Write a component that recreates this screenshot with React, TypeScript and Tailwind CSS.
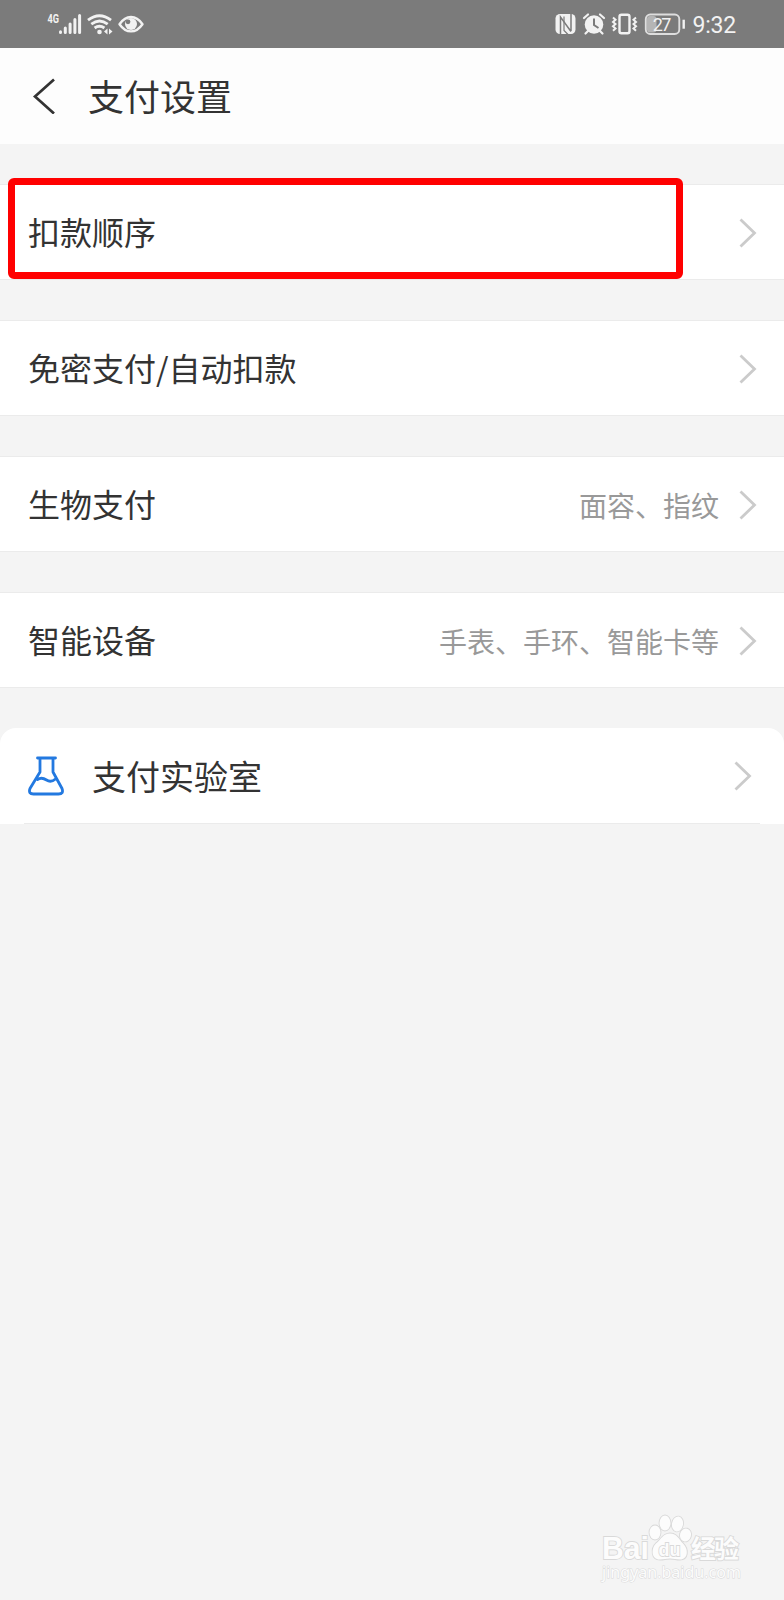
import React from "react";

interface SettingItem {
  label: string;
  value?: string;
}

const settings: SettingItem[] = [
  { label: "扣款顺序" },
  { label: "免密支付/自动扣款" },
  { label: "生物支付", value: "面容、指纹" },
  { label: "智能设备", value: "手表、手环、智能卡等" },
];

const Chevron: React.FC = () => (
  <svg
    className="h-[30px] w-[18px] shrink-0"
    viewBox="0 0 18 30"
    fill="none"
    stroke="#cbcbcb"
    strokeWidth="2.8"
  >
    <path d="M1.5 1.5 15.5 15l-14 13.5" />
  </svg>
);

const StatusBar: React.FC = () => (
  <div className="flex h-12 items-center justify-between bg-[#7b7b7b] pr-12 pl-[47px] text-[#f2f2f2]">
    <svg className="h-12 w-[98px]" viewBox="47 0 98 48" fill="none">
      <text
        x="47.5"
        y="22.5"
        fontSize="12"
        fontWeight="700"
        fill="currentColor"
        textLength="11.5"
        lengthAdjust="spacingAndGlyphs"
        fontFamily="Roboto, sans-serif"
      >
        4G
      </text>
      {/* Signal */}
      <g stroke="currentColor" strokeWidth="3" strokeLinecap="round">
        <path d="M60.5 31.8v.7M65.3 28v4.5M70.1 24v8.5M74.9 19.5v13M79.6 15.5v17" />
      </g>
      {/* Wifi */}
      <g stroke="currentColor" strokeWidth="2.8">
        <path d="M88 20.2q11.5-9 23 0M91.3 24.2q8.2-6.4 16.4 0M94.6 28q4.9-3.6 9.8 0" />
      </g>
      <circle cx="99.5" cy="32" r="2.3" fill="currentColor" />
      <path d="M107.5 28.500v6l-3.500-3zM109 28.500v6l3.500-3z" fill="currentColor" />
      {/* Eye */}
      <path
        d="M119.500 24.200q5-7.200 11.500-7.200t11.500 7.200q-5 7.200-11.500 7.200t-11.500-7.200z"
        stroke="currentColor"
        strokeWidth="2.4"
        strokeLinejoin="round"
      />
      <circle cx="131" cy="24" r="6" fill="currentColor" />
      <circle cx="128" cy="21.8" r="2.4" fill="#7b7b7b" />
    </svg>
    <div className="flex items-center">
      <svg className="h-12 w-[132px]" viewBox="554 0 132 48" fill="none">
        {/* NFC */}
        <rect x="555.5" y="14" width="20" height="20" rx="4.5" fill="currentColor" />
        <path
          d="M560.500 34V17l10.500 14.500M571 14v17"
          stroke="#7b7b7b"
          strokeWidth="1.5"
        />
        <path d="M564 16.500v14l4 4" stroke="#7b7b7b" strokeWidth="1.2" />
        {/* Alarm */}
        <circle cx="594" cy="24.5" r="9.3" fill="currentColor" />
        <path
          d="M584 18l4-3.500M604 18l-4-3.500M588 31l-2.500 2.500M600 31l2.500 2.500"
          stroke="currentColor"
          strokeWidth="2.2"
          strokeLinecap="round"
        />
        <path d="M594 18.500V25l4.500 3" stroke="#7b7b7b" strokeWidth="2" />
        {/* Vibrate */}
        <rect
          x="619.5"
          y="14.8"
          width="10"
          height="18.4"
          rx="2"
          stroke="currentColor"
          strokeWidth="2.4"
        />
        <path
          d="M613 17.500l2.500 2.200-2.500 2.200 2.500 2.200-2.500 2.200 2.500 2.200-2.500 2.200M636 17.500l-2.500 2.200 2.500 2.200-2.500 2.200 2.500 2.200-2.500 2.200 2.500 2.200"
          stroke="currentColor"
          strokeWidth="2"
        />
        {/* Battery */}
        <rect x="647" y="16" width="9.5" height="16.5" rx="3" fill="#b5b5b5" />
        <rect
          x="645.8"
          y="14.5"
          width="33.5"
          height="19.5"
          rx="4.5"
          stroke="#dedede"
          strokeWidth="1.9"
        />
        <path d="M683.700 19.700v9" stroke="currentColor" strokeWidth="2.4" />
        <text
          x="662"
          y="30.6"
          fontSize="18"
          textAnchor="middle"
          textLength="18.5"
          fill="currentColor"
          fontFamily="Roboto, sans-serif"
        >
          27
        </text>
      </svg>
      <span className="ml-1.5 pt-0.5 font-[Roboto,sans-serif] text-[23px] leading-none tracking-[-0.2px]">
        9:32
      </span>
    </div>
  </div>
);

const Watermark: React.FC = () => (
  <svg className="h-[76px] w-[150px]" viewBox="598 1510 150 76">
    <g
      fill="#fcfcfc"
      stroke="#d9d9d9"
      strokeWidth="1.8"
      paintOrder="stroke"
      fontFamily="'Liberation Sans', 'Noto Sans CJK SC', sans-serif"
    >
      <text
        x="602"
        y="1559"
        fontSize="31"
        fontWeight="700"
        textLength="47"
        lengthAdjust="spacingAndGlyphs"
      >
        Bai
      </text>
      <ellipse cx="655" cy="1532.5" rx="5.5" ry="7" />
      <ellipse cx="665" cy="1523" rx="5.5" ry="7.5" />
      <ellipse cx="677.5" cy="1524" rx="5.5" ry="7.5" transform="rotate(10 677.5 1524)" />
      <ellipse cx="685.5" cy="1535" rx="5.5" ry="6.5" transform="rotate(15 685.5 1535)" />
      <path d="M670 1533.500c7 0 9 6 13 10 6 6 5 16-3 16-4 0-6-1-10-1s-6 1-10 1c-9 0-9-11-4-16 5-4 7-10 14-10z" />
      <text
        x="658.5"
        y="1555.5"
        fontSize="19"
        fontWeight="700"
        textLength="22"
        lengthAdjust="spacingAndGlyphs"
      >
        du
      </text>
      <text x="691" y="1557.5" fontSize="25" fontWeight="700" textLength="48">
        经验
      </text>
      <text
        x="602"
        y="1577.5"
        fontSize="16"
        strokeWidth="1"
        textLength="139"
        lengthAdjust="spacingAndGlyphs"
        fontFamily="'Noto Sans', sans-serif"
      >
        jingyan.baidu.com
      </text>
    </g>
  </svg>
);

const App: React.FC = () => {
  return (
    <div className="flex h-[1600px] w-[784px] flex-col overflow-hidden bg-[#f4f4f4] font-['Noto_Sans_CJK_SC',sans-serif] text-[#333333]">
      <StatusBar />

      <header className="flex h-24 items-center bg-[#fdfdfd] pl-8">
        <svg
          className="h-9 w-6"
          viewBox="0 0 24 36"
          fill="none"
          stroke="currentColor"
          strokeWidth="2.7"
        >
          <path d="M22 1.500 3 18.500 22 35.500" />
        </svg>
        <h1 className="ml-8 pb-0.5 text-[36px] leading-none">支付设置</h1>
      </header>

      <main className="mt-10 flex flex-col gap-10">
        {settings.map((item, index) => (
          <div
            key={item.label}
            className="relative flex h-24 items-center border-y border-[#ebebeb] bg-white pt-0.5 pr-[27px] pl-7"
          >
            <span className="pb-1 text-[32px] leading-none">{item.label}</span>
            <span className="mr-5 ml-auto text-[28px] leading-none text-[#999999]">
              {item.value}
            </span>
            <Chevron />
            {index === 0 && (
              <div className="absolute -top-[7px] left-2 h-[101px] w-[675px] rounded-md border-[7px] border-[#ff0000]" />
            )}
          </div>
        ))}

        <div className="flex h-24 items-center rounded-t-2xl bg-white pr-8 pl-7">
          <svg
            className="h-10 w-9"
            viewBox="0 0 36 40"
            fill="none"
            stroke="#2379e0"
            strokeWidth="2.8"
            strokeLinecap="round"
            strokeLinejoin="round"
          >
            <path d="M9.500 2h18M12 2v14L2 32.500q-2 5.500 3.500 5.500h25q5.500 0 3.500-5.500L25 16V2M9.500 23.500c3-2 6-1.500 9 .5s6 1.500 9-1" />
          </svg>
          <span className="ml-7 text-[34px] leading-none">支付实验室</span>
          <div className="ml-auto">
            <Chevron />
          </div>
        </div>
      </main>
      <div className="mx-6 -mt-px h-px bg-[#ebebeb]" />

      <footer className="mt-auto mr-9 mb-3.5 flex justify-end">
        <Watermark />
      </footer>
    </div>
  );
};

export default App;
